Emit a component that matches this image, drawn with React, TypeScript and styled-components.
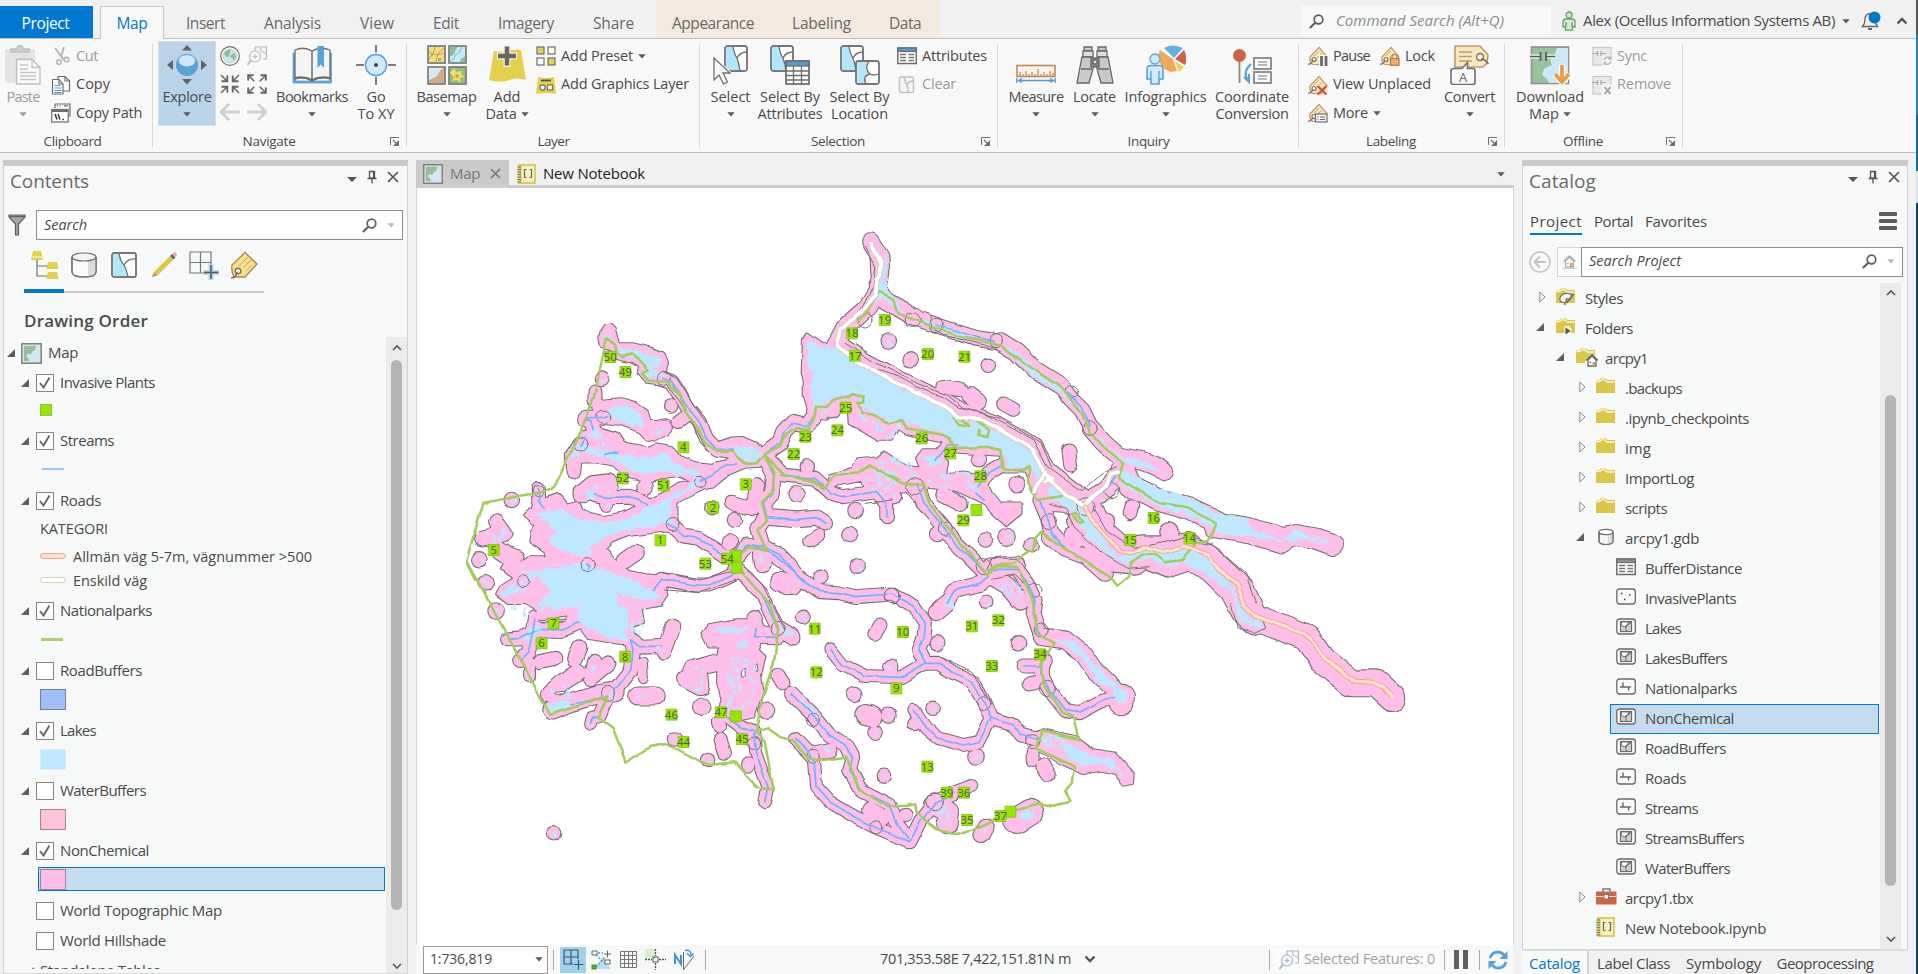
import React, { useLayoutEffect, useRef, useState } from "react";
import styled, { createGlobalStyle } from "styled-components";

const C = {
  chrome: "#f1f1f1",
  ribbon: "#f8f8f8",
  panel: "#f7f9f8",
  bar: "#cacaca",
  line: "#d0d0d0",
  text: "#4a4a4a",
  muted: "#6a6a6a",
  off: "#9b9b9b",
  blue: "#0079c8",
  select: "#c5dbef",
  pink: "#ffbee8",
  lake: "#bee8ff",
  stream: "#73b2ff",
  park: "#a3cc5c",
  plant: "#97e600",
  edge: "#757075",
};

const GlobalStyle = createGlobalStyle`
  * { box-sizing: border-box; }
  body { margin: 0; background: ${C.chrome}; overflow: hidden; }
`;

/* ---------- text ---------- */

const Span = styled.span<{ $size?: number; $color?: string; $weight?: number; $italic?: boolean }>`
  display: inline-block;
  margin-bottom: 2px;
  white-space: nowrap;
  font-size: ${(p) => p.$size ?? 14.5}px;
  color: ${(p) => p.$color ?? "inherit"};
  font-weight: ${(p) => p.$weight ?? 400};
  font-style: ${(p) => (p.$italic ? "italic" : "normal")};
`;

type TextProps = { w: number; size?: number; color?: string; weight?: number; italic?: boolean; children: string };

/* Tracks a label so that it takes up the width given in w. */
function Text({ w, size, color, weight, italic, children }: TextProps) {
  const ref = useRef<HTMLSpanElement>(null);
  const [track, setTrack] = useState(0);
  useLayoutEffect(() => {
    if (ref.current) {
      const natural = ref.current.getBoundingClientRect().width;
      setTrack((t) => t + (w - natural) / children.length);
    }
  }, [w, children]);
  return (
    <Span ref={ref} $size={size} $color={color} $weight={weight} $italic={italic} style={{ letterSpacing: `${track}px` }}>
      {children}
    </Span>
  );
}

/* ---------- shell ---------- */

const Desktop = styled.div`
  display: flex;
  width: 1918px;
  height: 974px;
  overflow: hidden;
  background: linear-gradient(#55585c 0 34px, #1386c4 34px 115px, #0b6aa8 115px 171px, #cfe3f1 171px 203px, #123f6d 203px);
  font-family: "Open Sans", "Noto Sans", sans-serif;
  font-size: 14.5px;
  color: ${C.text};
  svg { display: block; flex: none; }
`;
const Window = styled.div`
  display: flex;
  flex-direction: column;
  width: 1916px;
  background: ${C.chrome};
`;

/* ---------- tab row ---------- */

const TabRow = styled.header`
  display: flex;
  height: 39px;
  border-bottom: 1px solid #bfbfbf;
`;
const ProjectTab = styled.div`
  width: 93px;
  height: 32px;
  margin: 6px 7px 0 0;
  display: flex;
  align-items: center;
  justify-content: center;
  padding: 4px 2px 0 0;
  background: #0078d2;
  color: #fff;
`;
const ActiveTab = styled.div`
  width: 64px;
  height: 33px;
  margin-top: 6px;
  display: flex;
  align-items: center;
  justify-content: center;
  padding-top: 2px;
  background: ${C.ribbon};
  border: 1px solid #c6c6c6;
  border-bottom: 0;
  color: ${C.blue};
`;
const Tabs = styled.nav<{ $tint?: boolean }>`
  display: flex;
  align-items: center;
  gap: ${(p) => (p.$tint ? 38 : 39)}px;
  height: 38px;
  padding: ${(p) => (p.$tint ? "9px 19px 0 16px" : "9px 22px 0")};
  background: ${(p) => (p.$tint ? "#f3e9de" : "transparent")};
  color: ${C.muted};
`;
const Command = styled.div`
  display: flex;
  align-items: center;
  gap: 12px;
  width: 250px;
  height: 30px;
  margin: 6px 11px 0 auto;
  padding-left: 8px;
  background: ${C.panel};
`;
const Account = styled.div`
  display: flex;
  align-items: center;
  gap: 7px;
  height: 30px;
  margin-top: 6px;
  padding-right: 8px;
`;
const Bell = styled.div`
  margin: 0 8px 0 4px;
`;

/* ---------- ribbon ---------- */

const RibbonBar = styled.section`
  display: flex;
  height: 114px;
  padding: 0;
  background: ${C.ribbon};
  border-bottom: 1px solid #bfbfbf;
`;
const Group = styled.div<{ $w: number }>`
  display: flex;
  flex-direction: column;
  width: ${(p) => p.$w}px;
  background: linear-gradient(#d6d6d6, #d6d6d6) right 5px / 1px 103px no-repeat;
`;
const GroupBody = styled.div<{ $pad?: number }>`
  display: flex;
  height: 91px;
  padding-left: ${(p) => p.$pad ?? 0}px;
`;
const GroupFoot = styled.div`
  display: flex;
  align-items: center;
  height: 22px;
`;
const FootLabel = styled.div`
  flex: 1;
  display: flex;
  justify-content: center;
  padding-top: 1px;
`;
const Launcher = styled.div`
  width: 17px;
  margin-left: 5px;
  padding-top: 2px;
`;
const BigButton = styled.div<{ $w: number; $on?: boolean; $off?: boolean }>`
  display: flex;
  flex-direction: column;
  align-items: center;
  width: ${(p) => p.$w}px;
  height: 85px;
  margin-top: 2px;
  padding-top: 3px;
  background: ${(p) => (p.$on ? "#bad3e8" : "transparent")};
  box-shadow: ${(p) => (p.$on ? "inset 0 0 0 1px #cfe0f0" : "none")};
  color: ${(p) => (p.$off ? C.off : C.text)};
`;
const BigIcon = styled.div`
  display: flex;
  align-items: center;
  height: 42px;
  margin-bottom: 3px;
`;
const BigLine = styled.div`
  display: flex;
  align-items: center;
  gap: 4px;
  height: 17px;
`;
const SmallColumn = styled.div<{ $ml?: number; $w?: number }>`
  display: flex;
  flex-direction: column;
  width: ${(p) => (p.$w ? p.$w + "px" : "auto")};
  margin-left: ${(p) => p.$ml ?? 0}px;
  padding-top: 3px;
`;
const SmallRow = styled.div<{ $off?: boolean }>`
  display: flex;
  align-items: center;
  gap: 5px;
  height: 28.5px;
  color: ${(p) => (p.$off ? C.off : C.text)};
`;
const Gap = styled.i<{ $w: number }>`
  width: ${(p) => p.$w}px;
`;
const NavGrid = styled.div`
  display: grid;
  grid-template-columns: 20px 20px;
  grid-auto-rows: 28px;
  column-gap: 7px;
  align-items: center;
  margin: 3px 5px 0 4px;
`;

const Caret = ({ color = "#5a5a5a" }: { color?: string }) => (
  <svg width="8" height="5" viewBox="0 0 8 5"><path d="M0.3 0.3h7.4L4 4.6z" fill={color} /></svg>
);
const LaunchIcon = () => (
  <svg width="10" height="10" viewBox="0 0 10 10" fill="none" stroke="#707070">
    <path d="M0.5 8V0.5H9" /><path d="M3 3l3.6 3.6" strokeWidth="1.3" /><path d="M9 3v6H3z" fill="#707070" stroke="none" />
  </svg>
);

type BigProps = {
  w: number; icon: React.ReactNode; label: string; lw: number; second?: string; sw?: number;
  caret?: boolean; on?: boolean; off?: boolean;
};
const Big = ({ w, icon, label, lw, second, sw, caret, on, off }: BigProps) => (
  <BigButton $w={w} $on={on} $off={off}>
    <BigIcon>{icon}</BigIcon>
    <BigLine><Text w={lw}>{label}</Text></BigLine>
    <BigLine>
      {second ? <Text w={sw ?? 40}>{second}</Text> : null}
      {caret ? <Caret color={off ? C.off : undefined} /> : null}
    </BigLine>
  </BigButton>
);
const Small = ({ icon, label, w, off, caret }: { icon: React.ReactNode; label: string; w: number; off?: boolean; caret?: boolean }) => (
  <SmallRow $off={off}>{icon}<Text w={w}>{label}</Text>{caret ? <Caret /> : null}</SmallRow>
);
const Foot = ({ label, w, launch }: { label: string; w: number; launch?: boolean }) => (
  <GroupFoot>
    <FootLabel><Text w={w} size={13.5}>{label}</Text></FootLabel>
    {launch ? <Launcher><LaunchIcon /></Launcher> : null}
  </GroupFoot>
);

/* ---------- ribbon icons ---------- */

const G = "#6e6e6e";
const I20 = ({ children, w = 20 }: { children: React.ReactNode; w?: number }) => (
  <svg width={w} height={20} viewBox={`0 0 ${w} 20`} fill="none" stroke={G} strokeWidth="1.2">{children}</svg>
);
const I40 = ({ children }: { children: React.ReactNode }) => (
  <svg width="40" height="40" viewBox="0 0 40 40" fill="none" stroke={G} strokeWidth="1.3">{children}</svg>
);
const PasteIcon = () => (
  <I40>
    <rect x="2" y="4" width="30" height="34" rx="2" fill="#e4e4e4" stroke="none" />
    <path d="M8 7V4h6q0-3.5 3-3.500t3 3.500h6v3z" fill="#d0d0d0" stroke="#bdbdbd" />
    <path d="M13.500 14.500H29l8 8V39H13.500z" fill="#fafafa" stroke="#bdbdbd" /><path d="M29 14.500v8h8M17 20h8M17 24h8M17 27.500h16M17 31h16M17 34.500h16" stroke="#c6c6c6" />
  </I40>
);
const CutIcon = () => (
  <I20><g stroke="#b3b3b3" strokeWidth="1.8"><path d="M4 2l9 12M13 1l-3 10" /><circle cx="8" cy="16" r="2.300" strokeWidth="1.400" /><circle cx="15.500" cy="13.500" r="2.300" strokeWidth="1.400" /></g></I20>
);
const CopyIcon = () => (
  <I20>
    <path d="M7 1.500h7l4.500 4.500V16H7z" fill="#fff" /><path d="M14 1.500V6h4.500" />
    <path d="M1.500 4.500H8L12 9v10H1.500z" fill="#fff" /><path d="M8 4.500V9h4" /><path d="M3.500 10.500h6M3.500 13h7M3.500 15.500h7M3.500 17.500h7" stroke="#4f9bd3" />
  </I20>
);
const CopyPathIcon = () => (
  <I20>
    <path d="M4 5V1h15v12h-2" /><path d="M6 2.800h1M8.500 2.800h1M13 2.800h4" />
    <rect x="0.700" y="6.500" width="16.500" height="12.500" fill="#fff" /><path d="M1 8h16" strokeWidth="2" />
    <path d="M4 11l2 5.500M7 11l2 5.500" stroke="#333" strokeWidth="1.500" /><path d="M11.500 16.500h1.500" stroke="#333" strokeWidth="1.500" />
  </I20>
);
const ExploreIcon = () => (
  <I40>
    <circle cx="20" cy="20" r="11" fill="#56a3d9" stroke="none" /><ellipse cx="20" cy="15.700" rx="8.300" ry="5.800" fill="#cfe7f7" stroke="none" />
    <path d="M20 0l5 5.500H15zM20 39.500l-5-5.500h10zM0 20l6-5v10zM40 20l-6-5v10z" fill="#66625f" stroke="none" />
  </I40>
);
const GlobeIcon = () => (
  <I20><circle cx="10" cy="10" r="9.300" fill="#fff" /><circle cx="10" cy="10" r="7" fill="#cde6f5" stroke="#9cc5a0" strokeWidth="0.600" />
    <path d="M4 7q3-4 6-3l1 2-2 2 1 2-3 1-2-1zM12 8l3-1 1 4-2 4-2-3-2-1z" fill="#8dbf95" stroke="none" /></I20>
);
const ZoomSelIcon = ({ c = "#bcbcbc" }: { c?: string }) => (
  <I20><g stroke={c}><path d="M8 5V1h11.500v12H16M14 1q-1 5 2 5t3.500 4" /><circle cx="8" cy="10.500" r="5.500" fill="#fafafa" /><path d="M5.500 10.500h5M8 8v5" /><path d="M4 14.500L0.500 19" strokeWidth="2" /></g></I20>
);
const ArrowsIcon = ({ out }: { out?: boolean }) => (
  <I20>
    <g stroke="#666" strokeWidth="1.900">
      {out ? (
        <><path d="M1.200 6.500V1.200H6.500M13.500 1.200h5.300v5.300M1.200 13.500v5.300h5.300M13.500 18.800h5.300v-5.300" /><path d="M1.500 1.500l5.800 5.800M18.500 1.500l-5.800 5.800M1.500 18.500l5.800-5.800M18.500 18.500l-5.800-5.800" strokeWidth="1.500" /></>
      ) : (
        <><path d="M7.300 1.500v5.800H1.500M12.700 1.500v5.800h5.800M1.500 12.700h5.800v5.800M18.500 12.700h-5.800v5.800" /><path d="M1 1l6 6M19 1l-6 6M1 19l6-6M19 19l-6-6" strokeWidth="1.500" /></>
      )}
    </g>
  </I20>
);
const BackIcon = ({ flip }: { flip?: boolean }) => (
  <I20><path d={flip ? "M0 10h18M11 2l8 8-8 8" : "M20 10H2M9 2l-8 8 8 8"} stroke="#d2d2d2" strokeWidth="3" /></I20>
);
const BookIcon = () => (
  <I40>
    <path d="M2 8h2v28h34V8h1.500v30H1V8z" fill="#56a3d9" stroke="#56a3d9" strokeWidth="0.800" />
    <path d="M3 5q9-4 17 1 8-5 18-1v29q-10-3-18 2-8-5-17-2z" fill="#f4f4f4" /><path d="M20 6v29" strokeWidth="1.500" />
    <path d="M3 33q9-2 17 2 8-4 18-2" strokeWidth="2" /><path d="M25.500 1h6.500v22l-3.200-3.500-3.300 3.500z" fill="#56a3d9" stroke="none" />
  </I40>
);
const GoIcon = () => (
  <I40><circle cx="20" cy="20" r="10.500" fill="#d2e9f8" stroke="#56a3d9" strokeWidth="1.500" /><circle cx="20" cy="20" r="2" fill="#444" stroke="none" /><path d="M20 0v7.500M20 32v8M0 20h8M32 20h8" strokeWidth="1.500" stroke="#555" /></I40>
);
const BasemapIcon = () => (
  <I40>
    <rect x="1" y="1" width="17" height="17" fill="#f0df7c" /><path d="M2 14q6-6 6-12M2 7q8 5 15 1M9 17q0-8 8-14" stroke="#d18b56" strokeWidth="0.900" /><path d="M11 13h3v3h-3zM4 9h2v2H4z" fill="#8cbf6a" stroke="none" />
    <rect x="22" y="1" width="17" height="17" fill="#c8e8fb" /><path d="M22.500 1.500h9l-3 3-1 4-2 2-3 1zM38.500 11v6.500H33l1-4z" fill="#8dbf95" stroke="none" /><path d="M23 17l4-3 1-4 4-2 3-6" stroke="#56a3d9" strokeWidth="0.700" />
    <rect x="1" y="22" width="17" height="17" fill="#d5ab84" /><path d="M1.500 22.500H17l-4 3-3 6-5 2-3.500 2z" fill="#d5e9f6" stroke="none" />
    <rect x="22" y="22" width="17" height="17" fill="#8fbf7d" /><path d="M23 28l4-5 2 4 6-1-1 3 4 3-5 1 1 5-4-3-5 1 2-4z" fill="#f3dd63" stroke="none" /><path d="M29 29l3 1-1 3-3-1z" fill="#e99346" stroke="none" />
    <path d="M1 1h17v17H1zM22 1h17v17H22zM1 22h17v17H1zM22 22h17v17H22z" stroke="#858585" strokeWidth="1.500" />
  </I40>
);
const AddDataIcon = () => (
  <I40><path d="M7 6q7 1 13 0 7-2 14-1l5 30q-9-3-17 0-8 3-20 0z" fill="#e5d04d" stroke="none" /><path d="M20 0v22M10 11h20" stroke="#f6f2d8" strokeWidth="7" /><path d="M20 1.500v19M11 11h18" stroke="#666" strokeWidth="4.500" /></I40>
);
const PresetIcon = () => (
  <I20><rect x="1" y="1" width="7" height="7" fill="#e5d04d" /><rect x="12" y="1" width="7" height="7" fill="#fff" /><rect x="1" y="12" width="7" height="7" fill="#fff" /><rect x="12" y="12" width="7" height="7" fill="#e5d04d" /></I20>
);
const GraphicsIcon = () => (
  <I20><path d="M2 2q8 2 16 0l2 17q-10-2-20 0z" fill="#e5d04d" stroke="none" /><path d="M5 5.500h10" stroke="#555" strokeWidth="1.800" /><circle cx="6.500" cy="12.500" r="2.600" fill="#fff" /><rect x="11.500" y="10" width="5" height="5" fill="#fff" /></I20>
);
const tile = (x: number, y: number, s: number, fill = "#b2e6fa") => (
  <g transform={`translate(${x} ${y}) scale(${s / 22})`} strokeWidth={1.3 * (22 / s)}>
    <rect x="0" y="0" width="22" height="25" rx="2.500" fill="#fdfdfd" />
    <path d="M2 0.600h6q2 7 4.500 12.500T14.500 24.400H2.500Q0.600 24.400 0.600 22V2z" fill={fill} stroke="none" />
    <path d="M8 0q1 8 4 12 3-6 10-6M12 12q2 5 3 13" /><rect x="0" y="0" width="22" height="25" rx="2.500" />
  </g>
);
const SelectIcon = () => (
  <I40>{tile(14, 1, 22)}<path d="M3 13v22l5-5 4.500 9 4-2-4.500-9h7z" fill="#fafafa" stroke="#f8f8f8" strokeWidth="3" /><path d="M3 13v22l5-5 4.500 9 4-2-4.500-9h7z" fill="#fafafa" /></I40>
);
const SelAttrIcon = () => (
  <I40>{tile(1, 1, 22)}<rect x="16" y="16" width="23" height="23" fill="#fff" /><rect x="16" y="16" width="23" height="5" fill="#4f9bd3" /><path d="M16 26h23M16 30.500h23M16 35h23M23.500 21v18M31.500 21v18" /><rect x="16" y="16" width="23" height="23" /></I40>
);
const SelLocIcon = () => (
  <I40>{tile(1, 1, 22)}<rect x="16" y="16" width="23" height="23" rx="2.500" fill="#fdfdfd" /><path d="M17 17h11q-3 8 1 12-6 2-4 9h-6l-2-2z" fill="#b2e6fa" stroke="none" /><path d="M29 16q-5 8 1 13-8 2-4 10M30 29q3 2 9 0" /><rect x="16" y="16" width="23" height="23" rx="2.500" /></I40>
);
const AttrIcon = ({ head = "#4f9bd3" }: { head?: string }) => (
  <I20><rect x="0.800" y="2" width="18.500" height="15.500" fill="#fff" strokeWidth="1.500" /><rect x="1" y="2" width="18" height="3.500" fill={head} /><path d="M3 8.500h6M11.500 8.500H17M3 11.500h6M11.500 11.500H17M3 14.500h6M11.500 14.500H17" strokeWidth="1.500" stroke="#777" /></I20>
);
const ClearIcon = () => (
  <I20><g stroke="#c0c0c0" strokeWidth="1.400"><rect x="2.500" y="2" width="14" height="15.500" rx="1.500" fill="#f4f4f4" /><path d="M7 2q1 5 3 8 2-4 6-4M10 10q1 3 1 7" /></g></I20>
);
const MeasureIcon = () => (
  <I40><rect x="1" y="20.500" width="38" height="11" fill="#fbf5ec" stroke="#c48a55" strokeWidth="1.600" /><path d="M4 32v-5M7 32v-3M10 32v-6M13 32v-3M16 32v-5M19 32v-3M22 32v-8M25 32v-3M28 32v-5M31 32v-3M34 32v-6M37 32v-4" stroke="#c48a55" /><path d="M0.800 33v5M39.200 33v5M2 35.500h36M6 33.500L2.500 35.500 6 37.500M34 33.500l3.500 2-3.500 2" stroke="#4f9bd3" /></I40>
);
const LocateIcon = () => (
  <I40><g fill="#c9c9c9" stroke="#686868"><path d="M9 2h8v4h-8zM23 2h8v4h-8z" /><path d="M8 6h10v6H8zM22 6h10v6H22z" fill="#dedede" /><path d="M7 12h10l1 4v8L14 38H2l3-16zM33 12H23l-1 4v8l4 14h12l-3-16z" /><path d="M6 24h11M23 24h11" /><rect x="16" y="13" width="8" height="9" fill="#888" /><circle cx="20" cy="17" r="2" fill="#eee" /></g></I40>
);
const InfoIcon = () => (
  <I40>
    <path d="M27 14L14 5q-4 9 2 16 6 8 15 5z" fill="#f0a757" stroke="none" /><path d="M28 13L18 3q8-5 19 0z" fill="#62afe0" stroke="none" /><path d="M29 14l9-9q4 8 1 15z" fill="#cb6345" stroke="none" /><path d="M29 16l9 6-5 5z" fill="#e8d354" stroke="none" />
    <circle cx="9" cy="14" r="5" fill="#d2e9f8" stroke="#56a3d9" /><path d="M1 24q0-3.500 4-3.500h8q4 0 4 3.500v10h-4v5H5v-5H1z" fill="#d2e9f8" stroke="#56a3d9" strokeWidth="1.600" /><path d="M5 26v8M13 26v8" stroke="#56a3d9" />
  </I40>
);
const CoordIcon = () => (
  <I40><path d="M7.500 10v28" strokeWidth="1.800" stroke="#888" /><circle cx="7.500" cy="10.500" r="6.500" fill="#cb6345" stroke="none" /><path d="M19 19q-9 8-3 16M12 32l5 5v-8" stroke="#56a3d9" strokeWidth="2" /><g fill="#fafafa" stroke="#777" strokeWidth="1.600"><rect x="22" y="13" width="17" height="11" /><rect x="22" y="27" width="17" height="11" /><path d="M26 17h9M26 20h9M26 31h9M26 34h9" strokeWidth="1.200" /></g></I40>
);
const TagIcon = ({ kind }: { kind: "pause" | "lock" | "x" | "list" }) => (
  <I20>
    <path d="M2 11L11 1.500l8 9-5 8H5q-4-2-3-7.500z" fill="#f5e8bd" stroke="#c49a6c" /><path d="M6 10l5-5M9 12l5-5" stroke="#c49a6c" strokeWidth="0.900" />
    <circle cx="6" cy="13.500" r="2" fill="#fff" stroke="#8b6a48" /><path d="M5 14q-2 5-5 4" stroke="#777" />
    {kind === "pause" && <><path d="M11 9h9v11h-9z" fill="#f8f8f8" stroke="none" /><path d="M13.500 10v10M18 10v10" stroke="#6a6a6a" strokeWidth="2.800" /></>}
    {kind === "x" && <path d="M9.500 11l9 8.500M18.500 11l-9 8.500" stroke="#d4572f" strokeWidth="2.400" />}
    {kind === "lock" && <g><path d="M12 13v-2q0-2.500 2.500-2.500T17 11v2" stroke="#b9793a" /><rect x="10.500" y="12.500" width="8.500" height="6.800" fill="#efb169" stroke="#b9793a" /></g>}
    {kind === "list" && <g><rect x="7.500" y="11" width="11.500" height="8" fill="#f4f4f4" /><path d="M9.500 14h1M12 14h5M9.500 16.500h1M12 16.500h5" /></g>}
  </I20>
);
const ConvertIcon = () => (
  <I40>
    <path d="M5 1h25l8 9-1 8-4 4H5z" fill="#f5e8bd" stroke="#c49a6c" strokeWidth="1.600" /><path d="M9 7h13M9 11.500h13M9 16h13" stroke="#c49a6c" />
    <circle cx="30" cy="12" r="3.400" fill="#fff" stroke="#8b6a48" strokeWidth="1.500" /><path d="M31 14q4 0 7.500 5" strokeWidth="1.500" />
    <path d="M4 23.500h8l5.500-6 0 6h5.500q2 0 2 2V37q0 2.500-2 2.500H4q-3 0-3-2.500V26q0-2.500 3-2.500z" fill="#fafafa" strokeWidth="1.600" />
    <text x="13" y="36.500" textAnchor="middle" fontSize="13" fill="#666" stroke="none">A</text>
  </I40>
);
const DownloadIcon = () => (
  <I40>
    <rect x="1.500" y="2" width="37" height="36.500" fill="#98c29c" stroke="#909090" strokeWidth="1.600" /><path d="M38 3H27l-3 9-4 3 2 5-8 4-2 6 5 4 2 4h19z" fill="#cfe7f7" stroke="none" />
    <path d="M0 11.500h10M16 11.500h9" stroke="#f8f8f8" strokeWidth="4" /><path d="M0 11.500h10M10.500 7v9M16 7v9M16 11.500h9" strokeWidth="1.600" stroke="#555" />
    <path d="M32 20v13M24.500 29l7.500 8.500L39.500 29" stroke="#fff" strokeWidth="6" /><path d="M32 20v14M25 29l7 8 7-8" stroke="#ec9b48" strokeWidth="3.800" />
  </I40>
);
const SyncIcon = ({ kind }: { kind: "sync" | "x" }) => (
  <I20>
    <rect x="1" y="1.500" width="18" height="17.500" fill="#e9e9e9" stroke="#c9c9c9" /><path d="M0 7.500h5.500M5.500 5v5M9 5v5M9 7.500h5" stroke="#aaa" />
    <rect x="10" y="9.500" width="11" height="11" fill="#f8f8f8" stroke="none" />
    {kind === "sync" ? <path d="M12 14q1-3 4-3 2 0 3 2M19 15q-1 3.500-4 3.500-2 0-3-2M19 10v3h-3M12 19v-2.500h2.500" stroke="#b5b5b5" strokeWidth="1.300" /> : <path d="M12.500 12l6 7M18.500 12l-6 7" stroke="#aaa" strokeWidth="2" />}
  </I20>
);
const SearchIcon = ({ s = 15, c = "#5f5f5f" }: { s?: number; c?: string }) => (
  <svg width={s} height={s} viewBox="0 0 15 15" fill="none" stroke={c}><circle cx="9.500" cy="5.500" r="4.300" strokeWidth="1.700" /><path d="M6.300 8.700L0.800 14" strokeWidth="2.200" /></svg>
);

/* ---------- workspace ---------- */

const Work = styled.main`
  display: flex;
  height: 821px;
`;
const Pane = styled.section<{ $ml: number; $w: number; $h?: number }>`
  display: flex;
  flex-direction: column;
  width: ${(p) => p.$w}px;
  height: ${(p) => p.$h ?? 814}px;
  margin: 7px 0 0 ${(p) => p.$ml}px;
  background: ${C.panel};
  border: 1px solid ${C.line};
  border-top: 6px solid ${C.bar};
  border-bottom-color: #d8d8d8;
`;
const PaneHead = styled.div<{ $pl: number; $pr: number }>`
  display: flex;
  align-items: center;
  height: 30px;
  padding: 1px ${(p) => p.$pr}px 0 ${(p) => p.$pl}px;
  color: ${C.muted};
`;
const HeadTools = styled.div`
  display: flex;
  align-items: center;
  gap: 10px;
  height: 22px;
  margin: 0 0 9px auto;
`;
const HeadIcons = () => (
  <HeadTools>
    <svg width="10" height="14" viewBox="0 0 10 14"><path d="M0 7h10L5 12z" fill="#555" /></svg>
    <svg width="10" height="14" viewBox="0 0 10 14" fill="none" stroke="#555" strokeWidth="1.300"><path d="M2.500 1.500h5v6.500h-5zM0.500 8.500h9M5 9v4.500" /><path d="M6.700 2v6" strokeWidth="1.600" /></svg>
    <svg width="12" height="12" viewBox="0 0 12 12" fill="none" stroke="#555" strokeWidth="1.700"><path d="M1 1l10 10M11 1L1 11" /></svg>
  </HeadTools>
);
const SearchLine = styled.div<{ $pl: number; $top: number }>`
  display: flex;
  align-items: center;
  height: 30px;
  margin-top: ${(p) => p.$top}px;
  padding: 0 4px 0 ${(p) => p.$pl}px;
`;
const SearchBox = styled.div`
  flex: 1;
  display: flex;
  align-items: center;
  height: 30px;
  padding: 0 7px 0 7px;
  background: #fff;
  border: 1px solid #8e8e8e;
`;
const SearchTail = styled.div<{ $gap: number }>`
  display: flex;
  align-items: center;
  gap: ${(p) => p.$gap}px;
  margin-left: auto;
`;
const ViewRow = styled.div`
  display: flex;
  width: 240px;
  height: 43px;
  margin: 10px 0 0 20px;
  background: linear-gradient(#c8c8c8, #c8c8c8) 0 41px / 240px 2px no-repeat;
`;
const ViewButton = styled.div<{ $on?: boolean }>`
  display: flex;
  justify-content: center;
  width: 40px;
  height: 43px;
  padding-top: 1px;
  border-bottom: ${(p) => (p.$on ? `4px solid ${C.blue}` : "0")};
`;
const OrderTitle = styled.div`
  display: flex;
  align-items: center;
  height: 24px;
  margin: 16px 0 4px 20px;
`;
const Scroller = styled.div<{ $h: number; $catalog?: boolean }>`
  display: flex;
  height: ${(p) => p.$h}px;
  margin: ${(p) => (p.$catalog ? "6px 6px 0 0" : "0")};
  overflow: hidden;
`;
const Tree = styled.div<{ $clip?: number; $top?: number }>`
  flex: 1;
  height: ${(p) => (p.$clip ? p.$clip + "px" : "100%")};
  padding-top: ${(p) => p.$top ?? 0}px;
  overflow: hidden;
`;
const Track = styled.div`
  display: flex;
  flex-direction: column;
  align-items: center;
  width: 21px;
  background: #ebebeb;
`;
const Arrow = styled.div<{ $h: number; $end?: boolean }>`
  display: flex;
  align-items: center;
  height: ${(p) => p.$h}px;
  margin-top: ${(p) => (p.$end ? "auto" : "0")};
`;
const Thumb = styled.div<{ $top: number; $h: number }>`
  width: 11px;
  height: ${(p) => p.$h}px;
  margin-top: ${(p) => p.$top}px;
  border-radius: 6px;
  background: #b4b4b4;
`;
const Chevron = ({ down }: { down?: boolean }) => (
  <svg width="10" height="7" viewBox="0 0 10 7" fill="none" stroke="#5c5c5c" strokeWidth="1.700"><path d={down ? "M1 1l4 4 4-4" : "M1 6l4-4 4 4"} /></svg>
);

/* ---------- contents tree ---------- */

const LayerRow = styled.div<{ $gap: number; $pl: number; $on?: boolean }>`
  display: flex;
  align-items: center;
  height: ${(p) => (p.$on ? 24 : 22)}px;
  margin: ${(p) => p.$gap}px ${(p) => (p.$on ? 1 : 0)}px 0 ${(p) => (p.$on ? 34 : 0)}px;
  padding-left: ${(p) => p.$pl}px;
  background: ${(p) => (p.$on ? C.select : "transparent")};
  border: ${(p) => (p.$on ? `1px solid ${C.blue}` : "0")};
`;
const Check = styled.span`
  display: flex;
  align-items: center;
  justify-content: center;
  width: 18px;
  height: 18px;
  margin: 0 6px 0 7px;
  background: #fff;
  border: 1px solid #858585;
`;
const Swatch = styled.span<{ $fill: string; $line: string }>`
  width: 26px;
  height: 21px;
  background: ${(p) => p.$fill};
  border: 1px solid ${(p) => p.$line};
`;
const Open = () => (
  <svg width="8" height="8" viewBox="0 0 8 8"><path d="M8 0v8H0z" fill="#5f5f5f" /></svg>
);
const Closed = () => (
  <svg width="7" height="12" viewBox="0 0 7 12"><path d="M0.800 1v10L6 6z" fill="none" stroke="#8a8a8a" /></svg>
);
const Layer = ({ gap, name, w, on, leaf }: { gap: number; name: string; w: number; on?: boolean; leaf?: boolean }) => (
  <LayerRow $gap={gap} $pl={leaf ? 25 : 17}>
    {leaf ? null : <Open />}
    <Check>{on ? <svg width="12" height="12" viewBox="0 0 12 12" fill="none" stroke="#666" strokeWidth="1.900"><path d="M1 6l3.500 4.500L10.500 0.500" /></svg> : null}</Check>
    <Text w={w} size={15}>{name}</Text>
  </LayerRow>
);
const Pill = styled.span<{ $fill: string; $line: string }>`
  width: 26px;
  height: 6px;
  margin: 0 7px 3px 0;
  border-radius: 3px;
  background: ${(p) => p.$fill};
  border: 1.500px solid ${(p) => p.$line};
`;
const Rule = styled.span<{ $c: string; $h: number }>`
  width: 22px;
  height: ${(p) => p.$h}px;
  background: ${(p) => p.$c};
`;
const PlantMark = styled.span`
  width: 12px;
  height: 12px;
  background: ${C.plant};
  border: 1px solid #8fc63a;
`;
const MapThumb = ({ s = 20 }: { s?: number }) => (
  <svg width={s} height={s} viewBox="0 0 20 20"><rect x="0.800" y="0.800" width="18.400" height="18.400" fill="#fff" stroke="#7d7d7d" strokeWidth="1.500" /><rect x="2.500" y="2.500" width="15" height="15" fill="#92bf97" /><path d="M17.500 2.500h-3l-1.500 4.500-2.500 1.500 -1 2.500-3.500-1-1 3 2 1.500 1 3h9.500z" fill="#cfe7f7" /></svg>
);

const viewIcons = [
  <svg key="a" width="30" height="28" viewBox="0 0 30 28"><path d="M8 8v17h12M8 15h12" fill="none" stroke={G} strokeWidth="1.200" /><path d="M4 0h8l2 9H2zM19 11h9l1.500 7h-12zM19 21h9l1.500 7h-12z" fill="#e5d04d" /><path d="M3 6h10" stroke="#fff" /></svg>,
  <svg key="b" width="28" height="28" viewBox="0 0 28 28" fill="none" stroke={G} strokeWidth="1.200"><path d="M2 6v15q0 5 12 5t12-5V6" fill="#fafafa" /><path d="M18 9l8-3v16l-8 4z" fill="#dcdcdc" stroke="none" /><ellipse cx="14" cy="6" rx="12" ry="4" fill="#f4f4f4" /><path d="M2 6v15q0 5 12 5t12-5V6" /></svg>,
  <svg key="c" width="28" height="28" viewBox="0 0 28 28" fill="none" stroke={G} strokeWidth="1.300"><rect x="2" y="2" width="24" height="24" rx="2" fill="#fdfdfd" /><path d="M3 3h6q1 8 5 12 3 5 4 10.500H3z" fill="#b2e6fa" stroke="none" /><path d="M9 2q1 8 5 12 3 5 4 12M14 14q4-7 12-6M14 14" /><rect x="2" y="2" width="24" height="24" rx="2" /></svg>,
  <svg key="d" width="28" height="28" viewBox="0 0 28 28"><path d="M4 21L20 5l3.500 3.500-16 16L2 26z" fill="#dcc64a" /><path d="M20 5l2-2 3.500 3.500-2 2z" fill="#666" /><path d="M22 3q4-4 5 1l-1.500 2z" fill="#eba694" /><path d="M2 26l2-4.500 3 3z" fill="#c09060" /></svg>,
  <svg key="e" width="30" height="30" viewBox="0 0 30 30" fill="none" stroke="#777" strokeWidth="1.200"><path d="M1 1h21v21H1zM11.500 1v21M1 11.500h21" /><path d="M22 13v16M14.500 21.500H30" stroke="#a8d5f2" strokeWidth="5" /><path d="M22 14v14M15 21.500h14.500" stroke="#555" strokeWidth="1.500" /></svg>,
  <svg key="f" width="28" height="28" viewBox="0 0 28 28" fill="none" stroke="#b98550" strokeWidth="1.400"><path d="M2 14L15 1.500 27 13 15 26H4q-3-6-2-12z" fill="#f2e190" /><path d="M9 15l9-9M13 17l8-8M17 19l5-5" stroke="#c9a35c" strokeWidth="1" /><circle cx="8" cy="20" r="2.800" fill="#fff" stroke="#8b6a48" /><path d="M7 21q-1 6-6 6" stroke="#666" /></svg>,
];

const ContentsPane = () => (
  <Pane $ml={3} $w={405}>
    <PaneHead $pl={6} $pr={8}><Text w={79} size={19}>Contents</Text><HeadIcons /></PaneHead>
    <SearchLine $pl={4} $top={14}>
      <svg width="18" height="22" viewBox="0 0 18 22" fill="#a5a5a5" stroke="#5e5e5e" strokeWidth="1.200"><path d="M1 1h16v2l-6.500 7v11h-3V10L1 3z" /><path d="M1 2.500h16" stroke="#5e5e5e" /></svg>
      <Gap $w={10} />
      <SearchBox>
        <Text w={43} size={14.5} italic>Search</Text>
        <SearchTail $gap={10}><SearchIcon /><Caret color="#bbb" /></SearchTail>
      </SearchBox>
    </SearchLine>
    <ViewRow>{viewIcons.map((icon, i) => <ViewButton key={i} $on={i === 0}>{icon}</ViewButton>)}</ViewRow>
    <OrderTitle><Text w={124} size={17} weight={600}>Drawing Order</Text></OrderTitle>
    <Scroller $h={637}>
      <Tree $clip={632}>
        <LayerRow $gap={5} $pl={3}><Open /><Gap $w={6} /><MapThumb s={21} /><Gap $w={6} /><Text w={30} size={15}>Map</Text></LayerRow>
        <Layer gap={8} name="Invasive Plants" w={95} on />
        <LayerRow $gap={5} $pl={36}><PlantMark /></LayerRow>
        <Layer gap={9} name="Streams" w={54} on />
        <LayerRow $gap={6} $pl={38}><Rule $c="#9fc6f7" $h={2} /></LayerRow>
        <Layer gap={10} name="Roads" w={41} on />
        <LayerRow $gap={6} $pl={36}><Text w={68} size={14.5}>KATEGORI</Text></LayerRow>
        <LayerRow $gap={6} $pl={36}><Pill $fill="#fbe0cb" $line="#f1ac8c" /><Text w={239}>Allmän väg 5-7m, vägnummer &gt;500</Text></LayerRow>
        <LayerRow $gap={2} $pl={36}><Pill $fill="#fffffa" $line="#d3d2bb" /><Text w={74}>Enskild väg</Text></LayerRow>
        <Layer gap={8} name="Nationalparks" w={92} on />
        <LayerRow $gap={6} $pl={37}><Rule $c="#abd069" $h={3} /></LayerRow>
        <Layer gap={10} name="RoadBuffers" w={82} />
        <LayerRow $gap={6} $pl={36}><Swatch $fill="#9ebffc" $line="#74809a" /></LayerRow>
        <Layer gap={10} name="Lakes" w={36} on />
        <LayerRow $gap={6} $pl={36}><Swatch $fill={C.lake} $line="#d6effc" /></LayerRow>
        <Layer gap={10} name="WaterBuffers" w={86} />
        <LayerRow $gap={6} $pl={36}><Swatch $fill="#fcc3da" $line="#a38694" /></LayerRow>
        <Layer gap={10} name="NonChemical" w={89} on />
        <LayerRow $gap={5} $pl={1} $on><Swatch $fill={C.pink} $line="#9d8398" /></LayerRow>
        <Layer gap={9} name="World Topographic Map" w={162} leaf />
        <Layer gap={8} name="World Hillshade" w={106} leaf />
        <LayerRow $gap={8} $pl={22}><Open /><Gap $w={6} /><Text w={120} size={15}>Standalone Tables</Text></LayerRow>
      </Tree>
      <Track><Arrow $h={20}><Chevron /></Arrow><Thumb $top={3} $h={550} /><Arrow $h={14} $end><Chevron down /></Arrow></Track>
    </Scroller>
  </Pane>
);

/* ---------- catalog ---------- */

const CatalogColumn = styled.div`
  display: flex;
  flex-direction: column;
`;
const PaneTabs = styled.div`
  display: flex;
  align-items: flex-start;
  gap: 12px;
  height: 28px;
  margin-top: 14px;
  padding: 0 10px 0 7px;
`;
const PaneTab = styled.div<{ $on?: boolean }>`
  display: flex;
  align-items: center;
  height: 25px;
  border-bottom: 2px solid ${(p) => (p.$on ? C.blue : "transparent")};
`;
const MenuBars = styled.div`
  display: flex;
  flex-direction: column;
  gap: 3px;
  margin: 2px 0 0 auto;
  i { width: 18px; height: 4px; border-radius: 1px; background: #5c5c5c; }
`;
const Home = styled.div`
  display: flex;
  align-items: center;
  justify-content: center;
  width: 24px;
  height: 30px;
  margin-left: 6px;
  background: #fbfbfb;
  border: 1px solid #d3d3d3;
  border-right: 0;
`;
const NodeRow = styled.div<{ $level: number }>`
  display: flex;
  align-items: center;
  height: 30px;
  padding-left: ${(p) => p.$level * 20 + 11}px;
`;
const PickedRow = styled.div`
  display: flex;
  align-items: center;
  height: 30px;
  margin: 0 1px 0 87px;
  padding-left: 5px;
  background: ${C.select};
  border: 1px solid ${C.blue};
`;
const Twist = styled.span<{ $open?: boolean }>`
  display: flex;
  justify-content: center;
  width: 16px;
  margin-right: 6px;
  padding: 0 ${(p) => (p.$open ? 4 : 0)}px 3px 0;
`;
const NodeIcon = styled.span`
  width: 22px;
  margin-right: 7px;
  padding-bottom: 3px;
`;
const BottomTabs = styled.div`
  display: flex;
  height: 24px;
  margin-left: 8px;
  border-top: 1px solid #dcdcdc;
`;
const BottomTab = styled.div<{ $w: number; $on?: boolean }>`
  display: flex;
  justify-content: center;
  align-items: center;
  width: ${(p) => p.$w}px;
  height: 25px;
  background: ${(p) => (p.$on ? C.panel : "transparent")};
  border-right: ${(p) => (p.$on ? "2px solid #d4d4d4" : "0")};
  color: ${(p) => (p.$on ? C.blue : C.text)};
`;

type Kind = "style" | "folders" | "home" | "folder" | "gdb" | "table" | "point" | "poly" | "line" | "tbx" | "nb";
const NotebookIcon = () => (
  <I20><rect x="2" y="1" width="16" height="18" fill="#f7efc0" stroke="#d8c24a" strokeWidth="1.600" /><path d="M3.500 1v18" stroke="#d8c24a" strokeWidth="2" /><path d="M0 3h4M0 5.500h4M0 8h4M0 10.500h4M0 13h4M0 15.500h4M0 18h4" stroke="#777" strokeWidth="0.900" /><path d="M9.500 5.500H7.500v8h2M12.500 5.500h2v8h-2" stroke="#666" /></I20>
);
const House = ({ x = 0, y = 0, c = "#666" }: { x?: number; y?: number; c?: string }) => (
  <g transform={`translate(${x} ${y})`} stroke={c} fill="#fff" strokeWidth="1.300"><path d="M2.500 6v6h8V6L6.500 2z" /><path d="M0.500 6.500l6-5.500 6 5.500" fill="none" /><path d="M7 8h2.500v4H7z" fill="#d99a5a" stroke="none" /><path d="M4 8.500h1.500" /></g>
);
const CatIcon = ({ kind }: { kind: Kind }) => {
  const folder = <><path d="M0 3.500h3l2-2h5l1.500 1.500H19V16H0z" fill="#dcc64a" stroke="none" /><path d="M1 5.500V4.300h3l1.500-1.500H9L11 5h7.500" stroke="#fbf6dc" strokeWidth="1.300" /></>;
  if (kind === "folder") return <I20>{folder}</I20>;
  if (kind === "style") return <I20>{folder}<path d="M4 11q2-5 8-4.500 5 .5 3 4.500-1 1.500-3 1-2-1-2 1 0 3-3 2.500Q3 14.500 4 11z" fill="#f4f8fa" /><path d="M17.500 7l-7 9" strokeWidth="1.800" /><path d="M10 15l-1.500 3" stroke="#c88142" strokeWidth="2" /></I20>;
  if (kind === "folders") return <I20>{folder}<path d="M8 9h6l2 4-2 6H8z" fill="#f7f9f8" stroke="none" opacity="0.700" /><path d="M9.500 10.500v7l5-3.500z" fill="#555" stroke="none" /></I20>;
  if (kind === "home") return <svg width="22" height="20" viewBox="0 0 22 20" fill="none">{folder}<path d="M9 14l7-7 6 5v8H10z" fill="#f7f9f8" /><House x={9.500} y={7} /></svg>;
  if (kind === "gdb") return <I20><path d="M3 5v9q0 3.500 7 3.500t7-3.500V5" fill="#f4f4f4" /><path d="M12 7l5-2v10l-5 2z" fill="#dedede" stroke="none" /><ellipse cx="10" cy="5" rx="7" ry="2.600" fill="#fff" /><path d="M3 5v9q0 3.500 7 3.500t7-3.500V5" /></I20>;
  if (kind === "table") return <AttrIcon head="#8e8e8e" />;
  if (kind === "tbx") return <svg width="21" height="18" viewBox="0 0 21 18" fill="none"><path d="M7 4V1h7v3" stroke="#777" strokeWidth="1.500" /><rect x="0" y="3.500" width="20.500" height="13" fill="#cd6645" /><path d="M0 8.500h20" stroke="#f3d8ce" strokeWidth="1" /><rect x="8" y="6.500" width="4.500" height="4.500" fill="#fff" stroke="#777" /></svg>;
  if (kind === "nb") return <NotebookIcon />;
  return (
    <I20>
      <rect x="0.800" y="2" width="18.500" height="15" rx="2.800" fill="#f9f9f9" stroke="#6a6a6a" strokeWidth="1.300" />
      {kind === "point" && <path d="M5 6.500h1.500M8 12.500h1.500M13 8h1.500" stroke="#444" strokeWidth="1.600" />}
      {kind === "line" && <path d="M4 10h5M7 5.500V10h8M12.500 10v3.500M9 10h6" stroke="#666" strokeWidth="1.400" />}
      {kind === "poly" && <><rect x="4.500" y="4.500" width="11" height="10" fill="#cfcfcf" /><path d="M5 5h8l-3 5-4-1zM10 10v4" fill="#fff" stroke="#666" strokeWidth="0.900" /><path d="M9 10l6-5" strokeWidth="1.500" /></>}
    </I20>
  );
};

const nodes: [number, "open" | "closed" | "", Kind, string, number][] = [
  [0, "closed", "style", "Styles", 38],
  [0, "open", "folders", "Folders", 48],
  [1, "open", "home", "arcpy1", 43],
  [2, "closed", "folder", ".backups", 57],
  [2, "closed", "folder", ".ipynb_checkpoints", 124],
  [2, "closed", "folder", "img", 26],
  [2, "closed", "folder", "ImportLog", 69],
  [2, "closed", "folder", "scripts", 42],
  [2, "open", "gdb", "arcpy1.gdb", 74],
  [3, "", "table", "BufferDistance", 97],
  [3, "", "point", "InvasivePlants", 91],
  [3, "", "poly", "Lakes", 36],
  [3, "", "poly", "LakesBuffers", 82],
  [3, "", "line", "Nationalparks", 92],
  [3, "", "poly", "NonChemical", 89],
  [3, "", "poly", "RoadBuffers", 81],
  [3, "", "line", "Roads", 41],
  [3, "", "line", "Streams", 53],
  [3, "", "poly", "StreamsBuffers", 99],
  [3, "", "poly", "WaterBuffers", 85],
  [2, "closed", "tbx", "arcpy1.tbx", 68],
  [2, "", "nb", "New Notebook.ipynb", 141],
];

const CatalogPane = () => (
  <CatalogColumn>
    <Pane $ml={8} $w={386} $h={790}>
      <PaneHead $pl={6} $pr={7}><Text w={67} size={19}>Catalog</Text><HeadIcons /></PaneHead>
      <PaneTabs>
        <PaneTab $on><Text w={52} size={15} weight={500}>Project</Text></PaneTab>
        <PaneTab><Text w={39} size={15}>Portal</Text></PaneTab>
        <PaneTab><Text w={62} size={15}>Favorites</Text></PaneTab>
        <MenuBars><i /><i /><i /></MenuBars>
      </PaneTabs>
      <SearchLine $pl={6} $top={9}>
        <svg width="22" height="22" viewBox="0 0 22 22" fill="none" stroke="#c2c2c2"><circle cx="11" cy="11" r="10" strokeWidth="1.500" /><path d="M17 11H6M11 5.500L5.500 11l5.500 5.500" strokeWidth="2" /></svg>
        <Home><svg width="15" height="14" viewBox="0 0 15 14"><House x={1} y={0} c="#adadad" /><path d="M0 13.300h15" stroke="#b9d8bb" /></svg></Home>
        <SearchBox>
          <Text w={92} size={14.5} italic>Search Project</Text>
          <SearchTail $gap={10}><SearchIcon /><Caret color="#bbb" /></SearchTail>
        </SearchBox>
      </SearchLine>
      <Scroller $h={667} $catalog>
        <Tree $top={1}>
          {nodes.map(([level, state, kind, name, w], i) =>
            i === 14 ? (
              <PickedRow key={i}><NodeIcon><CatIcon kind={kind} /></NodeIcon><Text w={w} size={15}>{name}</Text></PickedRow>
            ) : (
              <NodeRow key={i} $level={level}>
                <Twist $open={state === "open"}>{state === "open" ? <Open /> : state === "closed" ? <Closed /> : null}</Twist>
                <NodeIcon><CatIcon kind={kind} /></NodeIcon>
                <Text w={w} size={15}>{name}</Text>
              </NodeRow>
            )
          )}
        </Tree>
        <Track><Arrow $h={20}><Chevron /></Arrow><Thumb $top={92} $h={491} /><Arrow $h={20} $end><Chevron down /></Arrow></Track>
      </Scroller>
    </Pane>
    <BottomTabs>
      <BottomTab $w={67} $on><Text w={51} size={15}>Catalog</Text></BottomTab>
      <BottomTab $w={89}><Text w={73} size={15}>Label Class</Text></BottomTab>
      <BottomTab $w={91}><Text w={75} size={15}>Symbology</Text></BottomTab>
      <BottomTab $w={112}><Text w={97} size={15}>Geoprocessing</Text></BottomTab>
    </BottomTabs>
  </CatalogColumn>
);

/* ---------- map ---------- */

type Sheet = "a" | "b" | "c";
type Pt = [number, number];
const sheets = { a: [450, 220, 3, 3], b: [780, 220, 2.45, 3], c: [450, 540, 2.24, 3] } as const;
const place = (s: Sheet, x: number, y: number): Pt => [sheets[s][0] + x / sheets[s][2], sheets[s][1] + y / sheets[s][3]];
const nums = (t: string) => t.trim().split(/[\s,]+/).map(Number);
const path = (s: Sheet, t: string) => {
  const n = nums(t);
  let d = "";
  for (let i = 0; i < n.length; i += 2) {
    const [x, y] = place(s, n[i], n[i + 1]);
    d += `${i ? "L" : "M"}${x.toFixed(1)} ${y.toFixed(1)}`;
  }
  return d + (n.length === 2 ? "h0.100" : "");
};

/* corridor buffers: sheet, diameter, points; "s" marks one with a stream in it */
const corridors: [Sheet, number, string, string?][] = [
  ["a", 13, "635,475 665,485 685,515 710,560 748,605 768,655 800,687 850,688", "s"],
  ["a", 13, "435,515 435,545"], ["a", 12, "685,606 714,585"],
  ["a", 14, "405,597 440,595 470,587", "s"], ["a", 13, "405,597 425,605 433,632", "s"], ["a", 13, "405,652 393,678", "s"],
  ["a", 15, "393,670 375,715"], ["a", 14, "372,735 370,756"],
  ["a", 14, "880,722 840,740 800,748 770,775 750,772"], ["a", 15, "940,705 990,670 1000,640 1030,607 1070,617 1092,592", "s"],
  ["a", 14, "1092,592 1105,575 1150,570"],
  ["a", 13, "945,705 1000,765 1095,775 1145,820 1180,830 1280,815 1310,850 1310,890", "s"],
  ["a", 14, "945,710 972,765 965,820 940,850 950,890 1040,898 1100,893 1125,910", "s"],
  ["a", 14, "945,890 922,925 940,985"],
  ["a", 13, "655,912 675,925 700,948 745,955 820,1005 870,1010 890,972 950,990 1000,1025 1060,1085", "s"],
  ["a", 14, "430,825 470,832 540,830 565,838 590,858", "s"], ["a", 13, "265,805 266,840 282,865", "s"],
  ["a", 18, "400,820 430,795 475,790 465,825"],
  ["a", 14, "660,835 700,815 760,785 800,755"], ["a", 14, "270,862 320,845 345,875"],
  ["a", 15, "140,905 165,940 98,957"], ["a", 15, "150,995 190,1020"],
  ["a", 14, "845,848 910,865 922,795"], ["a", 13, "526,1020 562,1000"], ["a", 18, "935,1008 938,1030"],
  ["a", 16, "600,635 645,622"],
  ["b", 17, "222,65 245,110 247,160 238,215 215,260 160,320 138,372"],
  ["b", 17, "238,200 258,240 300,270 330,292"],
  ["b", 15, "320,292 345,300 380,315 440,340 480,355 530,365"],
  ["b", 17, "540,365 580,395 625,450 690,500"], ["b", 15, "690,500 715,540 740,570 762,625"], ["b", 17, "762,625 790,665 835,715"],
  ["b", 17, "840,710 890,722 925,740 940,755"],
  ["b", 22, "840,745 860,800 930,840 1000,865 1070,905"], ["b", 25, "1070,915 1150,932 1230,960"], ["b", 20, "1230,958 1265,945 1310,955 1355,975"],
  ["b", 18, "138,372 210,428 290,480 400,545 450,578 530,615 620,680 655,755 740,835"],
  ["b", 20, "640,790 690,840 750,865"],
  ["b", 17, "745,850 800,810 825,765", "s"],
  ["b", 24, "760,870 790,935 840,990 890,985 950,985 1000,975 1060,1020"],
  ["b", 24, "735,900 780,980 820,1020 870,1025"], ["b", 20, "890,1010 950,1040 1010,1015"],
  ["b", 26, "1000,1000 1060,1050 1110,1110 1140,1180 1165,1205"],
  ["b", 26, "1060,1030 1130,1110 1160,1190 1290,1252 1330,1320 1400,1390 1460,1390 1500,1434"],
  ["b", 14, "638,840 655,890 665,940 700,985", "s"], ["b", 15, "660,950 700,988 750,1010 795,1060"],
  ["b", 14, "650,850 700,855 740,880"],
  ["b", 14, "335,790 352,850 400,920 430,970 500,1055", "s"],
  ["b", 12, "380,720 410,675 435,675", "s"], ["b", 13, "545,735 510,760 485,800", "s"],
  ["b", 17, "508,1065 520,1040 580,1035"], ["b", 13, "510,1048 580,1048 605,1090 625,1140 620,1180 632,1225 640,1245", "s"],
  ["b", 15, "510,1070 490,1090 440,1105 425,1115 410,1150", "s"], ["b", 17, "408,1150 385,1175"],
  ["b", 16, "525,1075 560,1100 590,1145"],
  ["b", 17, "640,1250 700,1260 745,1305 770,1350 820,1410"], ["b", 24, "838,1430 836,1450"],
  ["b", 13, "820,1432 785,1445 735,1478 700,1472 660,1410 643,1370 643,1310", "s"], ["b", 13, "598,1338 645,1338", "s"],
  ["b", 14, "400,500 440,508"], ["b", 16, "465,525 485,545"], ["b", 13, "548,552 572,568"], ["b", 13, "708,693 712,735"],
  ["b", 13, "245,1215 232,1243"], ["b", 13, "95,948 75,962"], ["b", 13, "610,1392 625,1388"], ["b", 14, "400,825 440,850"], ["b", 13, "862,860 858,878"],
  ["b", 15, "800,900 800,906"], ["b", 15, "715,945 725,960"], ["b", 18, "0,1085 30,1095"],
  ["c", 13, "455,150 475,118 550,135 580,135 610,120 645,98", "s"],
  ["c", 13, "640,85 665,115 700,165 720,225 735,265", "s"],
  ["c", 13, "640,62 655,40 665,15 700,18 740,45 760,75 780,110 830,155 870,158 910,170 990,162 1040,200 1065,250 1062,290 1050,330 1065,368", "s"],
  ["c", 12, "852,328 880,375 930,408 1010,412 1065,368", "s"],
  ["c", 13, "1065,370 1095,370 1130,400 1170,425 1195,485 1212,535 1260,555 1280,585 1320,600", "s"],
  ["c", 12, "1040,512 1065,560 1095,595 1150,615 1185,605 1212,535", "s"],
  ["c", 16, "740,270 765,290"], ["c", 14, "688,265 685,290 735,292", "s"],
  ["c", 14, "190,235 185,280 175,335 157,360", "s"], ["c", 14, "130,298 160,295 200,268 250,270 288,248", "s"],
  ["c", 14, "405,300 410,330 405,390 370,450", "s"], ["c", 19, "370,455 330,465 265,490 230,510"],
  ["c", 11, "355,468 335,530 318,535 315,550", "s"], ["c", 14, "405,300 425,320 475,318", "s"],
  ["c", 14, "500,260 490,300 480,335"], ["c", 14, "290,322 278,360"], ["c", 14, "322,365 315,415 355,370"],
  ["c", 13, "200,365 235,355"], ["c", 11, "178,370 178,410"], ["c", 17, "225,460 250,430 285,400"],
  ["c", 17, "420,468 462,468"], ["c", 10, "430,370 432,415"], ["c", 15, "415,40 392,62"],
  ["c", 13, "100,20 130,40 150,50"], ["c", 14, "735,408 745,430"],
  ["c", 13, "765,462 820,535 850,585 885,615 902,655 895,690 920,750 985,795 1003,855 1025,895", "s"],
  ["c", 12, "772,595 815,655 820,740 850,785 900,825 950,860 1030,905", "s"], ["c", 14, "815,640 850,630"],
  ["c", 13, "1030,905 1055,840 1085,790 1125,765", "s"], ["c", 12, "1125,760 1168,738"], ["c", 20, "1085,795 1118,815 1115,850"],
  ["c", 11, "620,530 650,560 680,575 685,640 712,740 705,785", "s"],
  ["c", 13, "605,600 615,640"], ["c", 12, "602,545 605,560"], ["c", 15, "940,810 970,835"], ["c", 14, "1200,860 1190,885"],
  ["c", 26, "1270,840 1300,815"], ["c", 15, "1330,680 1340,700"], ["c", 12, "1305,635 1305,660"], ["c", 20, "930,525 945,530"],
  ["c", 17, "525,415 560,440 555,385"],
];

/* stand-alone ponds: sheet, diameter, "x,y" centres */
const ponds: [Sheet, number, string][] = [
  ["a", 14.500, "455,478"], ["a", 14, "662,558"], ["a", 16, "585,800"], ["a", 14, "785,863"], ["a", 15, "855,900"], ["a", 16, "838,965"],
  ["a", 15, "185,840"], ["a", 15, "88,1018"], ["a", 14, "470,853"], ["a", 14, "1072,740"], ["a", 14, "105,1085"],
  ["b", 16, "265,363"], ["b", 15, "320,418"], ["b", 14, "510,436"], ["b", 16, "42,822"], ["b", 15, "185,873"], ["b", 15, "170,942"],
  ["b", 15, "190,1040"], ["b", 14, "100,1072"], ["b", 13, "505,1145"], ["b", 13, "57,1192"], ["b", 15, "385,1270"], ["b", 15, "583,1270"],
  ["b", 15, "270,1340"], ["b", 15, "182,1422"], ["b", 15, "487,718"], ["b", 15, "580,793"], ["b", 17, "555,950"], ["b", 14, "503,960"],
  ["b", 14, "615,975"], ["b", 15, "385,942"], ["b", 20, "953,935"], ["b", 14, "280,830"], ["b", 15, "648,1322"],
  ["c", 15, "82,130"], ["c", 16, "103,213"], ["c", 19, "755,135"], ["c", 14, "1082,505"], ["c", 15, "982,527"], ["c", 14, "952,577"],
  ["c", 13, "1040,552"], ["c", 15, "972,707"], ["c", 16, "1178,648"], ["c", 17, "565,500"], ["c", 17, "710,512"], ["c", 14, "505,597"],
  ["c", 13, "578,660"], ["c", 14, "667,675"], ["c", 15, "233,880"], ["c", 13, "1020,825"], ["c", 14, "790,232"], ["c", 15, "682,235"],
];

/* lake buffers, outer edges */
const shores: [Sheet, string][] = [
  ["a", "455,330 465,315 480,313 492,325 505,372 545,372 600,385 640,400 652,430 640,460 665,470 690,490 660,495 620,490 585,485 565,462 570,440 545,425 500,415 498,395 455,378 450,350"],
  ["a", "435,545 470,540 515,537 560,550 590,570 600,605 625,605 650,608 662,625 650,645 620,660 590,655 570,635 545,625 510,612 450,605 435,590"],
  ["a", "350,700 375,660 410,640 450,625 500,640 520,670 600,685 620,675 670,685 690,710 740,730 800,735 800,770 760,800 735,790 690,765 650,770 600,785 570,780 530,770 490,735 440,725 400,725 375,735 350,730"],
  ["a", "800,670 845,655 880,653 920,670 940,690 952,715 930,738 890,740 850,750 820,775 790,800 765,805 750,785 770,745 800,740 840,712 800,705"],
  ["a", "222,885 240,865 280,870 300,840 320,825 345,855 385,845 395,870 420,882 460,890 520,880 580,850 650,815 690,790 740,780 760,800 700,830 680,850 680,900 690,930 620,935 540,945 485,965 460,990 485,1010 490,1045 580,1075 600,1110 200,1110 190,1060 155,1045 165,1030 200,1035 240,1012 290,1010 285,995 240,965 245,935 255,915"],
  ["c", "120,60 160,75 180,50 230,60 290,45 350,30 370,60 400,95 440,105 480,110 485,165 470,195 430,205 435,250 410,260 410,310 380,310 340,300 310,295 290,260 260,240 200,240 185,235 200,215 170,190 130,190 105,165 115,140 145,115 125,95"],
  ["c", "565,280 580,255 640,240 675,240 690,215 700,260 740,270 775,285 780,300 740,300 700,300 690,330 705,350 695,400 700,450 680,530 640,540 600,520 610,480 600,430 600,390 570,400 560,440 575,460 540,445 515,420 530,370 570,355 600,345 605,320 580,320"],
  ["c", "1310,580 1330,570 1400,590 1440,630 1490,640 1530,700 1528,730 1510,735 1490,700 1460,690 1420,700 1370,670 1310,625"],
  ["b", "58,360 68,340 80,350 105,372 140,370 210,430 300,490 400,545 450,580 530,615 620,680 655,750 640,800 615,795 600,755 550,755 540,705 430,695 410,665 310,640 290,625 275,660 240,660 200,630 170,610 168,570 140,565 110,600 75,590 60,530 60,480 55,455"],
  ["b", "115,800 125,765 180,745 190,720 235,715 255,697 310,740 345,745 335,715 350,690 385,690 410,725 405,765 450,760 500,770 520,820 540,850 590,850 590,880 555,915 530,890 500,850 450,820 430,810 390,805 360,800 355,830 330,840 310,810 270,820 210,820 200,780 140,795"],
];

/* open water */
const lakes: [Sheet, string][] = [
  ["a", "500,385 540,385 570,398 615,405 640,425 612,440 625,455 640,470 600,475 580,460 590,445 560,420 545,405 515,405"], ["a", "462,360 475,332 485,362 478,372"],
  ["a", "475,570 500,555 540,560 570,580 580,600 575,625 550,615 510,605 475,590"], ["a", "605,640 625,625 645,620 630,640"],
  ["a", "380,670 440,690 520,705 600,712 640,698 690,735 750,755 745,775 700,765 640,755 590,765 540,755 500,720 450,710 385,685"],
  ["a", "410,650 430,620 460,655"], ["a", "360,715 372,690 388,710"],
  ["a", "845,675 900,680 930,690 935,715 880,722 860,700"],
  ["a", "245,885 300,870 340,870 400,900 470,908 540,895 600,860 650,835 740,780 752,788 665,840 660,890 670,910 600,920 520,930 470,950 445,965 420,985 420,1000 370,1010 320,985 300,960 320,935 290,925 300,905"],
  ["a", "400,820 430,810 445,830 425,838"], ["a", "1110,580 1140,560 1130,580"],
  ["c", "150,95 230,90 290,65 340,90 400,110 470,170 440,180 400,170 370,160 380,195 400,210 400,240 395,300 350,290 310,265 285,240 290,200 240,205 190,195 225,160 200,115"],
  ["c", "115,155 145,130 165,145 120,175"], ["c", "165,290 190,250 210,270 175,310"], ["c", "215,500 265,480 270,500 225,520"], ["c", "345,470 365,455 370,470"],
  ["c", "585,275 610,262 670,262 672,272 620,280"], ["c", "640,310 665,300 665,325 645,325"], ["c", "740,262 765,285 775,290 745,285"], ["c", "612,500 630,465 632,495 620,505"],
  ["c", "455,310 478,330 478,340"], ["c", "315,375 325,375 320,405"], ["c", "780,470 800,490 830,530 820,535"], ["c", "415,470 435,465 440,475"], ["c", "688,60 700,45 698,65"],
  ["c", "1370,610 1400,620 1440,650 1480,655 1515,715 1500,700 1465,670 1410,675 1385,655"], ["c", "1275,825 1290,812 1308,815 1305,835 1280,840"], ["c", "1190,880 1205,855 1200,880"],
  ["c", "1080,810 1100,800 1110,830"], ["c", "845,620 852,640 838,632"],
  ["b", "68,362 110,385 140,380 190,430 290,500 390,560 430,590 500,615 600,680 635,720 640,775 628,780 612,745 560,748 550,700 520,680 440,685 420,655 300,600 270,610 200,560 195,525 140,530 90,560 80,570 75,510 80,460 68,440"],
  ["b", "240,180 262,190 265,215 290,250 300,280 280,262 255,235 228,250"], ["b", "235,80 262,125 262,180 245,180 252,130"],
  ["b", "330,300 370,305 460,345 440,352 350,315"], ["b", "540,370 580,395 625,450 690,505 760,600 752,600 700,530 620,465 560,395"],
  ["b", "760,635 835,710 890,720 925,740 945,760 900,745 840,730 780,670"],
  ["b", "840,750 870,770 950,815 1000,830 1070,880 1140,895 1160,930 1230,960 1260,935 1310,950 1365,975 1310,965 1270,955 1230,965 1150,950 1070,940 1060,920 990,880 930,860 835,790"],
  ["b", "660,800 740,865 770,920 830,1010 900,985 1000,985 1050,1010 1100,1080 1140,1180 1180,1210 1180,1225 1130,1205 1105,1120 1040,1060 1000,1030 940,1035 900,1010 850,1030 810,1010 760,960 720,880 650,820"],
  ["b", "350,712 375,705 398,725 375,745"], ["b", "190,570 215,595 210,605 192,590"], ["b", "455,800 475,785 490,820"], ["b", "670,1255 720,1262 760,1320 810,1380 830,1400 850,1420 845,1450 825,1455 815,1405 780,1385 740,1310"],
  ["b", "410,1130 425,1120 425,1165 405,1160"], ["b", "0,1210 30,1235 30,1245 0,1235"], ["b", "590,1145 600,1158 585,1150"], ["b", "235,805 250,780 255,798"],
];

/* where tiny tarns are scattered: sheet, centre, radii, count */
const scatter: [Sheet, number, number, number, number, number][] = [
  ["b", 265, 745, 60, 35, 34], ["c", 645, 420, 40, 95, 46], ["c", 1345, 600, 30, 25, 26], ["b", 560, 1105, 30, 30, 18], ["b", 250, 615, 45, 30, 16],
  ["a", 330, 1045, 90, 20, 14], ["c", 180, 150, 50, 70, 16], ["b", 420, 770, 60, 30, 16], ["c", 1100, 820, 20, 30, 10], ["c", 545, 400, 25, 50, 8],
  ["a", 1290, 780, 40, 40, 18], ["a", 480, 790, 50, 20, 6], ["a", 520, 395, 40, 14, 8], ["a", 440, 680, 60, 30, 12], ["b", 560, 700, 20, 30, 12], ["c", 250, 440, 30, 40, 10],
  ["a", 140, 930, 40, 30, 8], ["c", 420, 240, 20, 50, 8],
];
const tarns = scatter.flatMap(([s, cx, cy, rx, ry, n], k) =>
  Array.from({ length: n }, (_, i) => {
    const r = Math.sqrt(((i * 37 + k * 11) % 100) / 100);
    const t = i * 2.4 + k;
    const [x, y] = place(s, cx + Math.cos(t) * rx * r, cy + Math.sin(t) * ry * r);
    return { x, y, w: 1.5 + (i % 3), h: 1.5 + ((i * 7) % 5) * 0.8 };
  })
);

/* buffer outlines that cross inside other buffers */
const innerLines: [Sheet, string][] = [
  ["b", "210,80 235,140 228,200 200,265 155,330"], ["b", "165,395 215,440 290,470 340,505 400,530 440,565 490,575 540,605 620,660 655,740 740,815 790,760 825,740"],
  ["b", "160,370 230,425 340,492 410,525 450,565 540,595 640,670 665,740"], ["b", "770,865 800,930 830,955 870,985 950,965 1000,945 1060,970"], ["b", "370,290 375,325 400,345 530,385"],
  ["b", "660,850 700,865 720,920 790,1000 850,1045 905,1040"], ["b", "1105,1150 1120,1220 1165,1240 1190,1225 1180,1190"], ["b", "1005,960 1060,975 1140,1060 1165,1145"],
  ["a", "640,457 680,475 745,575 770,610"], ["a", "655,495 700,560 745,640 770,690"], ["a", "1245,850 1330,840"], ["c", "660,80 700,135 725,200 750,270"], ["c", "480,100 560,120 630,95"],
  ["c", "480,150 560,158 640,120"], ["c", "1100,350 1170,395 1210,490"], ["b", "505,1050 520,1015 580,1015 620,1080"], ["b", "520,1078 575,1065 600,1095"],
];
const innerRings: [Sheet, number, number, number][] = [
  ["a", 415, 1037, 7], ["a", 393, 672, 7], ["a", 460, 590, 6.5], ["a", 640, 475, 7], ["a", 1245, 300, 7], ["a", 668, 912, 6.5], ["a", 265, 812, 6], ["a", 750, 787, 6],
  ["b", 325, 300, 7.5], ["b", 385, 317, 7.5], ["b", 530, 362, 7], ["b", 715, 515, 6.5], ["b", 760, 625, 7], ["b", 275, 1127, 8], ["b", 812, 812, 8], ["b", 330, 800, 8], ["b", 500, 1040, 8], ["b", 405, 925, 7],
  ["b", 750, 860, 9], ["b", 660, 905, 8], ["b", 625, 1110, 7], ["b", 640, 1230, 7], ["b", 655, 1405, 8],
  ["c", 815, 540, 6.5], ["c", 1305, 605, 7], ["c", 990, 168, 8], ["c", 735, 265, 7], ["c", 165, 125, 6], ["c", 815, 648, 6.5], ["c", 1085, 785, 8], ["c", 955, 862, 6.5], ["c", 680, 610, 6], ["c", 355, 460, 7], ["c", 1195, 490, 6.5],
];

const parks: [Sheet, string][] = [
  ["a", "470,355 495,375 500,400 520,412 548,403 585,440 590,455 573,463 590,482 650,485 690,525 705,575 745,625 765,670 800,692 845,692 865,715 890,732 920,730 940,705 990,680 1000,650 1040,622 1075,627 1092,600 1098,560 1130,560 1150,540 1195,532 1205,523 1240,530 1240,545 1222,545 1240,575 1320,610 1355,600 1370,625 1480,645 1500,655"],
  ["b", "412,655 430,685 510,680 540,690 545,745 595,753 612,740 605,780 630,840 690,828"],
  ["a", "470,355 430,540 400,620 305,810 100,848 48,1025 75,1080"],
  ["c", "38,65 225,525 355,468 333,535 350,550 365,565 378,610 393,668 450,620 485,612 580,675 637,667 690,745 725,748 705,605 685,577 700,470 725,370 735,265 715,190 655,100 640,85"],
  ["a", "870,1010 893,982 950,992 922,930 950,900 935,850 970,810 972,755 940,705"],
  ["c", "685,575 712,565 740,592 765,600 800,650 835,660 888,650 915,745 980,800 1020,797 1042,793 1045,815 1090,868 1135,885 1190,860 1260,810 1320,790 1350,797 1390,785 1378,750 1395,730 1400,680 1312,625 1325,570 1408,598 1395,530 1372,518 1330,435 1325,370 1352,310 1315,280 1305,180 1270,80 1215,78 1203,105"],
  ["b", "508,1065 410,920 365,850 350,795 300,790 220,735 195,760 135,765 105,805 80,780 0,765"], ["a", "945,705 1000,765 1085,782 1117,803"],
  ["b", "215,275 240,212 280,240 290,280 330,300 440,350 545,378 600,430 690,505 740,580 760,640 840,730 830,775 930,850 1000,862 1070,915 1050,960 1020,970 985,1020 945,1027 920,1005 890,1005 860,1030 855,1070 828,1097 800,1065 690,980 640,935 625,955 620,990 570,1030 530,1035 508,1065"],
  ["b", "215,275 190,305"], ["b", "425,590 440,615 465,622 440,595"], ["b", "485,605 512,630 508,652 488,645 490,632"], ["b", "712,880 722,875 743,908 735,912 712,880"],
];
const privateRoads: [Sheet, string][] = [
  ["b", "222,68 232,95 248,130 246,165 235,180 232,225 210,265 148,330 138,375 190,425 290,492 350,530 400,558 440,590 500,602 540,630 620,690 640,735 648,765 700,825 745,855 765,830 800,800 810,765 828,760"],
  ["b", "645,765 630,795 625,815"], ["b", "648,785 665,775"],
];
const publicRoad: [Sheet, string] = ["b", "748,858 765,900 800,950 835,993 865,1000 895,983 935,997 990,978 1050,1005 1075,1050 1120,1090 1140,1160 1165,1188 1280,1240 1310,1270 1330,1310 1405,1383 1455,1387 1480,1402 1503,1434"];

const tags: [Sheet, number, number, string][] = [
  ["a", 481, 411, "50"], ["a", 526, 456, "49"], ["a", 700, 682, "4"], ["a", 518, 775, "52"], ["a", 641, 796, "51"], ["a", 887, 793, "3"], ["a", 789, 863, "2"], ["a", 631, 961, "1"],
  ["a", 131, 990, "5"], ["a", 766, 1031, "53"], ["a", 1031, 702, "22"], ["a", 1066, 650, "23"], ["a", 1162, 631, "24"], ["a", 1187, 563, "25"], ["a", 1415, 655, "26"],
  ["a", 1206, 340, "18"], ["a", 1215, 407, "17"], ["a", 1304, 300, "19"], ["a", 1433, 402, "20"],
  ["b", 452, 410, "21"], ["b", 417, 700, "27"], ["b", 491, 769, "28"], ["b", 449, 901, "29"], ["b", 915, 894, "16"], ["b", 858, 960, "15"], ["b", 1003, 955, "14"],
  ["b", 470, 1219, "31"], ["b", 535, 1201, "32"], ["b", 85, 1226, "11"], ["b", 301, 1236, "10"], ["b", 89, 1357, "12"], ["b", 285, 1405, "9"], ["b", 519, 1338, "33"], ["b", 637, 1303, "34"],
  ["c", 232, 250, "7"], ["c", 205, 310, "6"], ["c", 392, 350, "8"], ["c", 496, 524, "46"], ["c", 654, 597, "45"], ["c", 523, 606, "44"],
  ["c", 1069, 680, "13"], ["c", 1113, 758, "39"], ["c", 1151, 758, "36"], ["c", 1158, 840, "35"],
  ["a", 857, 1007, ""], ["a", 860, 1043, ""], ["b", 481, 870, ""], ["c", 640, 529, ""], ["c", 1255, 815, ""],
  ["a", 831, 1016, "54"], ["c", 607, 517, "47"], ["c", 1233, 828, "37"],
];

const gaps: [Sheet, string][] = [["c", "655,400 662,385 664,410 657,415"], ["c", "685,372 688,368 690,390 686,392"], ["c", "235,460 255,457 258,464 238,466"], ["c", "200,238 258,238 262,228 240,232 220,238 225,245 200,242"]];

const MapDrawing = () => (
  <svg width="1096" height="757" viewBox="417 188 1096 757" fill="none" strokeLinejoin="round" strokeLinecap="round">
    <defs>
      <filter id="shore" x="0" y="0" width="100%" height="100%"><feTurbulence type="fractalNoise" baseFrequency="0.06" numOctaves="1" seed="4" /><feDisplacementMap in="SourceGraphic" scale="5" xChannelSelector="R" yChannelSelector="G" /></filter>
      <filter id="water" x="0" y="0" width="100%" height="100%"><feTurbulence type="fractalNoise" baseFrequency="0.14" numOctaves="3" seed="9" /><feDisplacementMap in="SourceGraphic" scale="9" xChannelSelector="R" yChannelSelector="G" /></filter>
    </defs>
    <g filter="url(#shore)">
      <rect x="417" y="188" width="1096" height="757" fill="#fff" />
      <g stroke={C.edge}>
        {corridors.map(([s, w, t], i) => <path key={i} d={path(s, t)} strokeWidth={w + 2} />)}
        {ponds.map(([s, w, t], i) => <path key={i} d={path(s, t)} strokeWidth={w + 1.5} />)}
        {shores.map(([s, t], i) => <path key={i} d={path(s, t) + "Z"} strokeWidth="3.600" />)}
      </g>
      <g stroke={C.pink} fill={C.pink}>
        {corridors.map(([s, w, t], i) => <path key={i} d={path(s, t)} fill="none" strokeWidth={w - 0.2} />)}
        {ponds.map(([s, w, t], i) => <path key={i} d={path(s, t)} strokeWidth={w - 0.7} />)}
        {shores.map(([s, t], i) => <path key={i} d={path(s, t) + "Z"} strokeWidth="1.400" />)}
      </g>
      <g fill="#fff" stroke={C.edge}>{gaps.map(([s, t], i) => <path key={i} d={path(s, t) + "Z"} />)}</g>
    </g>
    <g filter="url(#water)">
      <g fill={C.lake}>
        {lakes.map(([s, t], i) => <path key={i} d={path(s, t) + "Z"} />)}
        {tarns.map((p, i) => <rect key={i} x={p.x} y={p.y} width={p.w} height={p.h} />)}
      </g>
      <g stroke={C.lake} strokeWidth="2.200">{ponds.map(([s, , t], i) => <path key={i} d={path(s, t) + "l1.500 2"} />)}</g>
    </g>
    <g stroke={C.edge} strokeWidth="1" filter="url(#shore)">
      {innerLines.map(([s, t], i) => <path key={i} d={path(s, t)} />)}
      {innerRings.map(([s, x, y, r], i) => { const [cx, cy] = place(s, x, y); return <circle key={i} cx={cx} cy={cy} r={r} />; })}
    </g>
    <g stroke={C.stream} strokeWidth="1.700" filter="url(#shore)">
      {corridors.filter((c) => c[3]).map(([s, , t], i) => <path key={i} d={path(s, t)} />)}
      <path d={path("b", "330,298 345,308")} /><path d={path("b", "385,315 440,335 480,352 525,365")} /><path d={path("b", "705,520 740,560 760,620")} /><path d={path("b", "200,560 202,580")} />
      <path d={path("a", "465,700 485,695 505,698")} /><path d={path("a", "410,1035 420,1042 415,1050")} /><path d={path("a", "750,785 770,772 800,752 830,738 860,732")} />
      <path d={path("c", "270,492 310,485 355,465")} /><path d={path("b", "480,820 500,840")} />
    </g>
    <g stroke={C.park} strokeWidth="2.500" filter="url(#shore)">{parks.map(([s, t], i) => <path key={i} d={path(s, t)} />)}</g>
    <g filter="url(#shore)">
      <g stroke="#cfcdb4" strokeWidth="5">{privateRoads.map(([s, t], i) => <path key={i} d={path(s, t)} />)}</g>
      <g stroke="#fff" strokeWidth="3.600">{privateRoads.map(([s, t], i) => <path key={i} d={path(s, t)} />)}</g>
      <path d={path(...publicRoad)} stroke="#ee9f7c" strokeWidth="4.800" /><path d={path(...publicRoad)} stroke="#fde3cf" strokeWidth="3.200" />
    </g>
    {tags.map(([s, x, y, t], i) => {
      const [cx, cy] = place(s, x, y);
      return (
        <g key={i}>
          <rect x={cx - 5} y={cy - 5.5} width="10.500" height="11" fill={C.plant} stroke="#82bf10" strokeWidth="0.800" />
          {t ? <text x={cx} y={cy + 4} textAnchor="middle" fontSize="11.500" fontFamily="Noto Sans, sans-serif" fill="#555c4a">{t}</text> : null}
        </g>
      );
    })}
  </svg>
);

/* ---------- document area ---------- */

const Document = styled.section`
  display: flex;
  flex-direction: column;
  width: 1098px;
  margin: 7px 0 0 8px;
`;
const DocTabs = styled.div`
  display: flex;
  align-items: center;
  height: 28px;
  border-bottom: 3px solid #cdcdcd;
`;
const DocTab = styled.div<{ $active?: boolean }>`
  display: flex;
  align-items: center;
  height: 25px;
  padding: 2px 8px 0 7px;
  background: ${(p) => (p.$active ? C.bar : "transparent")};
  color: ${(p) => (p.$active ? "#777" : "#222")};
`;
const Overflow = styled.div`
  margin: 4px 9px 0 auto;
`;
const Canvas = styled.div`
  height: 757px;
  border: 1px solid #d4d4d4;
  border-width: 0 1px;
  background: #fff;
`;
const Status = styled.footer`
  display: flex;
  align-items: center;
  height: 29px;
  padding-left: 7px;
  background: ${C.panel};
`;
const ScaleBox = styled.div`
  display: flex;
  align-items: center;
  justify-content: space-between;
  width: 125px;
  height: 28px;
  margin-top: 1px;
  padding: 0 4px 1px 6px;
  background: #fff;
  border: 1px solid #9a9a9a;
`;
const Divider = styled.i<{ $l: number; $r: number }>`
  width: 1px;
  height: 20px;
  margin: 0 ${(p) => p.$r}px 0 ${(p) => p.$l}px;
  background: #a8a8a8;
`;
const Toggle = styled.div`
  display: flex;
  align-items: center;
  justify-content: center;
  width: 26px;
  height: 26px;
  background: #9fd1ef;
`;
const Tools = styled.div`
  display: flex;
  align-items: center;
  gap: 8px;
  margin-left: 5px;
`;
const Coords = styled.div`
  display: flex;
  align-items: center;
  gap: 13px;
  margin-left: 174px;
  padding-bottom: 1px;
`;
const Selected = styled.div`
  display: flex;
  align-items: center;
  gap: 5px;
  width: 164px;
  height: 24px;
  padding-left: 4px;
  background: #fbfbfb;
`;

const MapDocument = () => (
  <Document>
    <DocTabs>
      <DocTab $active><MapThumb s={20} /><Gap $w={7} /><Text w={30} size={15}>Map</Text><Gap $w={10} />
        <svg width="11" height="11" viewBox="0 0 11 11"><path d="M1 1l9 9M10 1l-9 9" stroke="#777" strokeWidth="1.600" /></svg>
      </DocTab>
      <DocTab><Gap $w={1} /><NotebookIcon /><Gap $w={6} /><Text w={102} size={15}>New Notebook</Text></DocTab>
      <Overflow><Caret /></Overflow>
    </DocTabs>
    <Canvas><MapDrawing /></Canvas>
    <Status>
      <ScaleBox><Text w={62} size={14}>1:736,819</Text><Caret /></ScaleBox>
      <Divider $l={5} $r={6} />
      <Toggle><svg width="21" height="21" viewBox="0 0 21 21" fill="none" stroke="#456" strokeWidth="1.200"><path d="M1 1h14v14H1zM8 1v14M1 8h14" /><path d="M15.500 10v11M10 15.500h11" stroke="#9fd1ef" strokeWidth="4" /><path d="M15.500 11v9.500M11 15.500h9.500" /></svg></Toggle>
      <Tools>
        <svg width="21" height="21" viewBox="0 0 21 21" fill="none" stroke="#666"><path d="M3 20L12 8l8 12z" fill="#b9dcf3" stroke="none" /><path d="M1 2h5v4H1zM13 5h7M16.500 1.500v7" /><path d="M7 4h5M5 18l9-10M5 6l9 8" strokeDasharray="2 1.500" stroke="#4f9bd3" strokeWidth="1.400" /><rect x="1" y="16" width="4" height="4" fill="#5fae46" stroke="#3d8a2a" /><rect x="14" y="11" width="5" height="4" fill="#fff" /></svg>
        <svg width="17" height="17" viewBox="0 0 17 17" fill="none" stroke="#777"><path d="M0.500 0.500h16v16h-16zM4.500 0v17M8.500 0v17M12.500 0v17M0 4.500h17M0 8.500h17M0 12.500h17" /></svg>
        <svg width="21" height="21" viewBox="0 0 21 21" fill="none" stroke="#555"><path d="M0 0h10v10H0z" fill="#d8ecd3" stroke="none" /><path d="M10.500 0v7M10.500 14v7M0 10.500h7M14 10.500h7" strokeDasharray="2 1" strokeWidth="1.300" /><rect x="8" y="8" width="5" height="5" /></svg>
        <svg width="21" height="21" viewBox="0 0 21 21" fill="none" stroke="#3f93cf" strokeWidth="2"><path d="M1 15V6l6 9V6" /><path d="M11 1.500q6-1 6 4M13 4.500l3.500 3 3-3" strokeWidth="1.500" /><path d="M10 20L20 7M9.500 3v18" stroke="#666" strokeWidth="1" /></svg>
      </Tools>
      <Divider $l={10} $r={0} />
      <Coords><Text w={191} size={14.5}>701,353.58E 7,422,151.81N m</Text><svg width="12" height="8" viewBox="0 0 12 8"><path d="M1.500 1.500L6 6l4.500-4.500" fill="none" stroke="#555" strokeWidth="2.400" /></svg></Coords>
      <Divider $l={173} $r={5} />
      <Selected><ZoomSelIcon c="#a9b9c6" /><Text w={131} size={14.5} color="#a2a2a2">Selected Features: 0</Text></Selected>
      <Divider $l={5} $r={9} />
      <svg width="14" height="19" viewBox="0 0 14 19"><path d="M0 0h5v19H0zM9 0h5v19H9z" fill="#5e5e5e" /></svg>
      <Divider $l={11} $r={8} />
      <svg width="20" height="20" viewBox="0 0 20 20" fill="none" stroke="#56a3d9" strokeWidth="2.800"><path d="M2 8q2-6 8-6 4 0 6.500 4M18 12q-2 6-8 6-4 0-6.500-4" /><path d="M19.500 1v8h-8zM0.500 19v-8h8z" fill="#56a3d9" stroke="none" /></svg>
    </Status>
  </Document>
);

/* ---------- page ---------- */

const Ribbon = () => (
  <RibbonBar>
    <Group $w={153}>
      <GroupBody>
        <Big w={46} icon={<PasteIcon />} label="Paste" lw={33} caret off />
        <SmallColumn $ml={5}>
          <Small icon={<CutIcon />} label="Cut" w={22} off />
          <Small icon={<CopyIcon />} label="Copy" w={34} />
          <Small icon={<CopyPathIcon />} label="Copy Path" w={66} />
        </SmallColumn>
      </GroupBody>
      <GroupFoot><FootLabel><Text w={58} size={13.5}>Clipboard</Text><Gap $w={8} /></FootLabel></GroupFoot>
    </Group>
    <Group $w={254}>
      <GroupBody $pad={5}>
        <Big w={58} icon={<ExploreIcon />} label="Explore" lw={49} caret on />
        <NavGrid><GlobeIcon /><ZoomSelIcon /><ArrowsIcon /><ArrowsIcon out /><BackIcon /><BackIcon flip /></NavGrid>
        <Big w={80} icon={<BookIcon />} label="Bookmarks" lw={72} caret />
        <Big w={48} icon={<GoIcon />} label="Go" lw={19} second="To XY" sw={37} />
      </GroupBody>
      <Foot label="Navigate" w={53} launch />
    </Group>
    <Group $w={293}>
      <GroupBody $pad={3}>
        <Big w={73} icon={<BasemapIcon />} label="Basemap" lw={60} caret />
        <Big w={48} icon={<AddDataIcon />} label="Add" lw={27} second="Data" sw={31} caret />
        <SmallColumn $ml={5}>
          <Small icon={<PresetIcon />} label="Add Preset" w={72} caret />
          <Small icon={<GraphicsIcon />} label="Add Graphics Layer" w={128} />
        </SmallColumn>
      </GroupBody>
      <Foot label="Layer" w={32} />
    </Group>
    <Group $w={298}>
      <GroupBody $pad={4}>
        <Big w={53} icon={<SelectIcon />} label="Select" lw={40} caret />
        <Big w={66} icon={<SelAttrIcon />} label="Select By" lw={60} second="Attributes" sw={65} />
        <Big w={73} icon={<SelLocIcon />} label="Select By" lw={60} second="Location" sw={57} />
        <SmallColumn $ml={1}>
          <Small icon={<AttrIcon />} label="Attributes" w={65} />
          <Small icon={<ClearIcon />} label="Clear" w={34} off />
        </SmallColumn>
      </GroupBody>
      <Foot label="Selection" w={54} launch />
    </Group>
    <Group $w={301}>
      <GroupBody $pad={6}>
        <Big w={64} icon={<MeasureIcon />} label="Measure" lw={55} caret />
        <Big w={53} icon={<LocateIcon />} label="Locate" lw={43} caret />
        <Big w={89} icon={<InfoIcon />} label="Infographics" lw={82} caret />
        <Big w={84} icon={<CoordIcon />} label="Coordinate" lw={74} second="Conversion" sw={73} />
      </GroupBody>
      <Foot label="Inquiry" w={42} />
    </Group>
    <Group $w={206}>
      <GroupBody $pad={9}>
        <SmallColumn $w={134}>
          <SmallRow><TagIcon kind="pause" /><Text w={37}>Pause</Text><Gap $w={0} /><TagIcon kind="lock" /><Text w={30}>Lock</Text></SmallRow>
          <Small icon={<TagIcon kind="x" />} label="View Unplaced" w={98} />
          <Small icon={<TagIcon kind="list" />} label="More" w={35} caret />
        </SmallColumn>
        <Big w={55} icon={<ConvertIcon />} label="Convert" lw={51} caret />
      </GroupBody>
      <Foot label="Labeling" w={50} launch />
    </Group>
    <Group $w={178}>
      <GroupBody $pad={8}>
        <Big w={74} icon={<DownloadIcon />} label="Download" lw={68} second="Map" sw={30} caret />
        <SmallColumn $ml={5}>
          <Small icon={<SyncIcon kind="sync" />} label="Sync" w={30} off />
          <Small icon={<SyncIcon kind="x" />} label="Remove" w={54} off />
        </SmallColumn>
      </GroupBody>
      <Foot label="Offline" w={40} launch />
    </Group>
  </RibbonBar>
);

export default function App() {
  return (
    <Desktop>
      <GlobalStyle />
      <Window>
        <TabRow>
          <ProjectTab><Text w={48} size={15.5}>Project</Text></ProjectTab>
          <ActiveTab><Text w={31} size={15.5}>Map</Text></ActiveTab>
          <Tabs>
            <Text w={39} size={15.5}>Insert</Text><Text w={57} size={15.5}>Analysis</Text><Text w={34} size={15.5}>View</Text>
            <Text w={26} size={15.5}>Edit</Text><Text w={56} size={15.5}>Imagery</Text><Text w={41} size={15.5}>Share</Text>
          </Tabs>
          <Tabs $tint><Text w={82} size={15.5}>Appearance</Text><Text w={59} size={15.5}>Labeling</Text><Text w={32} size={15.5}>Data</Text></Tabs>
          <Command><SearchIcon /><Text w={168} size={15} color="#8b8b8b" italic>Command Search (Alt+Q)</Text></Command>
          <Account>
            <svg width="14" height="20" viewBox="0 0 14 20" fill="#d4ead4" stroke="#5fa463" strokeWidth="1.300"><circle cx="7" cy="4" r="3" /><path d="M1 11q0-3 3-3h6q3 0 3 3v5h-2.500v3.200h-7V16H1z" /><path d="M4 11v5M10 11v5" fill="none" /></svg>
            <Text w={252} size={15}>Alex (Ocellus Information Systems AB)</Text>
            <Caret />
            <Bell><svg width="20" height="20" viewBox="0 0 20 20" fill="none" stroke="#666" strokeWidth="1.300"><path d="M1.500 15.500Q4 13 4 8.500 4 3 9 2.500 14 3 14 8.500q0 4.500 2.500 7z" /><path d="M7 18h4" strokeWidth="2" /><circle cx="13.500" cy="6.500" r="6" fill="#0079c8" stroke="none" /></svg></Bell>
            <svg width="12" height="8" viewBox="0 0 12 8"><path d="M1.500 6.500L6 2l4.500 4.500" fill="none" stroke="#555" strokeWidth="2.400" /></svg>
          </Account>
        </TabRow>
        <Ribbon />
        <Work><ContentsPane /><MapDocument /><CatalogPane /></Work>
      </Window>
    </Desktop>
  );
}
